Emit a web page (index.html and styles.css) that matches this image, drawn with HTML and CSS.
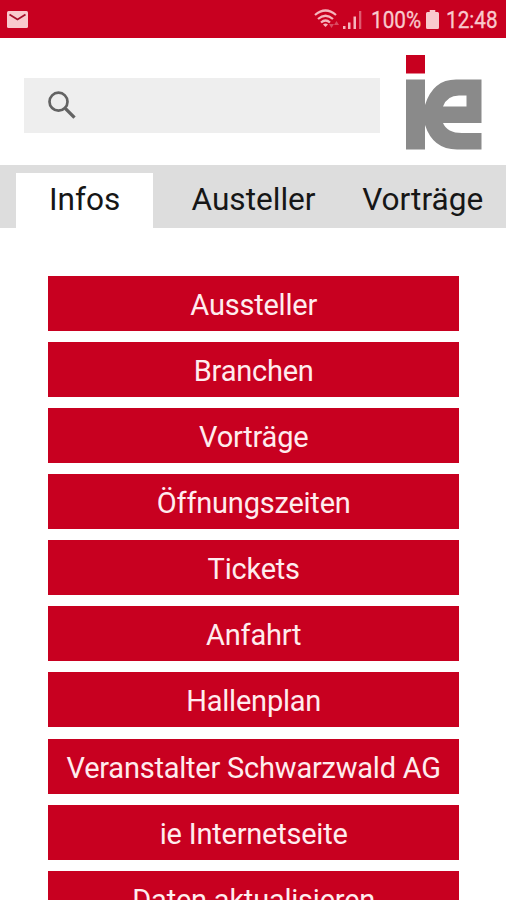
FILE: index.html
```html
<!DOCTYPE html>
<html lang="de">
<head>
<meta charset="utf-8">
<title>ie Messe</title>
<link rel="stylesheet" href="styles.css">
</head>
<body>
<div class="status">
  <svg class="mail" width="21" height="17" viewBox="0 0 21 17"><rect width="21" height="17" rx="1.5" fill="#f9c9cd"/><path d="M2.500 3.500L10.500 8.500L18.500 3.500" fill="none" stroke="#a8102c" stroke-width="1.800"/></svg>
  <div class="status-right">
    <svg class="signal" width="50" height="22" viewBox="0 0 50 22">
      <g fill="none" stroke="#f5b5bd" stroke-width="2.200"><path d="M1 6Q11.500-3 22 6"/><path d="M4 10Q11.500 3.500 19 10"/><path d="M7 13.500Q11.500 9.500 16 13.500"/></g>
      <path d="M9 15.500Q11.500 13.500 14 15.500L11.500 18Z" fill="#f5b5bd"/>
      <path d="M15 15h5l-2.500 4zM20 16h5l-2.500-4z" fill="#d94b62"/>
      <path d="M29 17h2.500v3H29zM34 13.500h2.500V20H34zM39.500 7.500H42V20h-2.500z" fill="#f5b5bd"/><path d="M45 2h2.300v18H45z" fill="#df5c70"/>
    </svg>
    <span class="percent">100%</span>
    <svg class="battery" width="13" height="19" viewBox="0 0 14 19" preserveAspectRatio="none"><path d="M4 0h6v2h2.500Q14 2 14 3.500V17.500Q14 19 12.500 19h-11Q0 19 0 17.500V3.500Q0 2 1.500 2H4z" fill="#f9c9cd"/></svg>
    <span class="clock">12:48</span>
  </div>
</div>
<header class="header">
  <div class="search">
    <svg width="30" height="30" viewBox="0 0 30 30" fill="none" stroke="#636363"><circle cx="10.500" cy="10.700" r="9" stroke-width="2.700"/><path d="M17.500 17.700L26.500 26.700" stroke-width="3.300"/></svg>
  </div>
  <svg class="logo" width="76" height="95" viewBox="0 0 76 95">
    <path d="M0 0h19v18.500H0z" fill="#c8001f"/>
    <path fill="#8a8a8a" fill-rule="evenodd" d="M0 24.500H19V50Q27 24.500 50 24.500H75.500V68H37Q41 78 56 78H75.500V94.500H51Q27 94.500 19 70V94.500H0ZM37 51.500H60.500V40.500H53Q41 40.500 37 51.500Z"/>
  </svg>
</header>
<nav class="tabs">
  <span class="tab active">Infos</span>
  <span class="tab exhibitors">Austeller</span>
  <span class="tab talks">Vorträge</span>
</nav>
<main class="menu">
  <a class="button">Aussteller</a>
  <a class="button">Branchen</a>
  <a class="button">Vorträge</a>
  <a class="button">Öffnungszeiten</a>
  <a class="button">Tickets</a>
  <a class="button">Anfahrt</a>
  <a class="button">Hallenplan</a>
  <a class="button">Veranstalter Schwarzwald AG</a>
  <a class="button">ie Internetseite</a>
  <a class="button">Daten aktualisieren</a>
</main>
</body>
</html>
```
FILE: styles.css
```css
* { box-sizing: border-box; }
body {
  margin: 0;
  height: 900px;
  overflow: hidden;
  background: #fff;
  font-family: Roboto, "Liberation Sans", sans-serif;
}
svg { display: block; flex: none; }
.status {
  display: flex;
  justify-content: space-between;
  height: 38px;
  padding: 0 8px 0 7px;
  background: #c80020;
  color: #f9c9cd;
}
.mail { margin-top: 11px; }
.status-right { display: flex; white-space: nowrap; line-height: 41px; }
.signal { margin: 9px 7px 0 0; }
.battery { margin: 10px 7px 0 6px; }
.percent, .clock {
  font-size: 23px;
  -webkit-text-stroke: 0.3px;
  transform: scaleX(0.9);
  transform-origin: left;
}
.percent { width: 49px; }
.clock { width: 52px; }
.header {
  display: flex;
  height: 127px;
  padding: 16px 24px 0;
  justify-content: space-between;
}
.search {
  width: 356px;
  height: 55px;
  margin-top: 24px;
  padding: 13px 24px;
  background: #eee;
}
.logo { margin-top: 1px; }
.tabs {
  display: flex;
  height: 63px;
  padding: 8px 0 0 16px;
  background: #ddd;
  color: #161616;
  font-size: 31.6px;
  line-height: 54px;
  white-space: nowrap;
}
.tab { flex: none; height: 55px; text-align: center; }
.active { width: 137.4px; background: #fff; }
.exhibitors { width: 200.3px; }
.talks { width: 138px; }
.menu {
  display: flex;
  flex-direction: column;
  gap: 11.1px;
  padding: 47.9px 46.6px 0 48px;
}
.button {
  flex: none;
  height: 55px;
  background: #c80020;
  color: #ffecee;
  font-size: 29px;
  letter-spacing: -0.22px;
  line-height: 58px;
  text-align: center;
  white-space: nowrap;
}
```
